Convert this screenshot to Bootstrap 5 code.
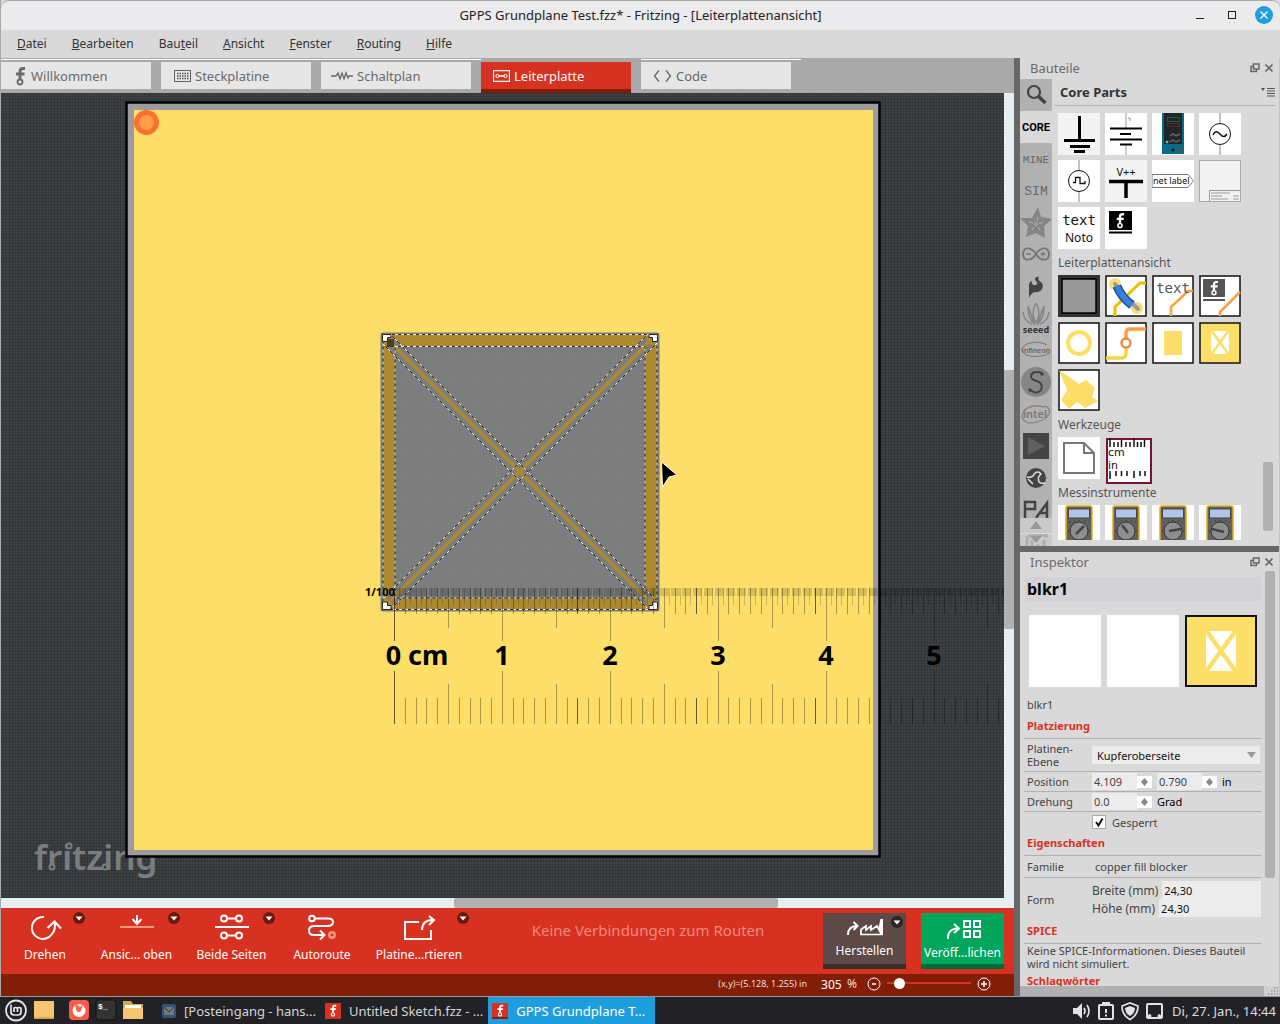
<!DOCTYPE html>
<html lang="de">
<head>
<meta charset="utf-8">
<meta name="viewport" content="width=device-width, initial-scale=1">
<title>GPPS Grundplane Test.fzz* - Fritzing - [Leiterplattenansicht]</title>
<link href="https://cdn.jsdelivr.net/npm/bootstrap@5.3.0/dist/css/bootstrap.min.css" rel="stylesheet">
<style>
:root{--fz-red:#d73122;--fz-dark:#821e08;--fz-grey:#d9d9d9;--fz-line:#b0b0b0;--fz-copper:#fdde68}
body{font-family:"Noto Sans","Open Sans",sans-serif;font-size:12px;line-height:16px;color:#333;background:#111}
button,input,select{font-family:inherit}
svg{display:block;flex:none}
.win{background:var(--fz-grey);border-left:1px solid #aaa;min-height:0}
.titlebar{height:30px;padding-bottom:2px;background:#ebebed;border-top:1px solid #aaa;border-radius:8px 8px 0 0;font-size:13px;color:#222}
.wbtns{right:7px;top:5px}
.plainbtn{border:0;background:none;padding:0;color:inherit}
.menubar{height:28px;padding-left:16px;gap:25px}
.menubar a{color:#333;text-decoration:none}
.tabstrip{height:35px;background:#a9a9a9;padding-top:1px}
.tabcell{width:160px;padding-right:10px;border-top:1px solid #fff;height:34px;padding-top:2px}
.tabcell.on{border-color:#a9a9a9}
.tabcell button{width:100%;height:27px;background:#e6e6e6;color:#6a6a6a;border:0;font-size:13px;gap:4px;padding:0 0 0 12px}
.tabcell.on button{height:31px;background:var(--fz-red);color:#fff;border-bottom:4px solid var(--fz-dark)}
.vbar{width:10px;background:#e6eef2;padding-top:277px}
.vbar div{height:259px;background:#b1b1b1;border-radius:0 0 2px 2px}
.hbar{height:10px;background:#e6eef2;padding-left:453px}
.hbar div{width:324px;height:10px;background:#b1b1b1;border-radius:2px}
.tools{height:66px;background:var(--fz-red);color:#fff}
.tool{height:66px;padding-top:5px}
.tool span{margin-top:6px}
.w88{width:88px}.w95{width:95px}.w86{width:86px}.w108{width:108px}
.tool .drop{right:4px;top:4px}
.routing{color:#f08b7a;font-size:15px;padding-bottom:22px}
.bigbtn{width:83px;height:56px;color:#fff;margin-top:5px;white-space:nowrap}
.make{background:#5d4a46;border-bottom:5px solid #392c29;margin-right:15px}
.share{background:#00a65b;border-bottom:5px solid #006b3a;margin-right:10px}
.bigbtn .drop{right:3px;top:3px}
.statusline{height:22px;background:var(--fz-dark);color:#f6ddd5;padding:0 23px 2px 0;gap:6px}
.coords{font-size:9px}
.zoombox{width:22px;height:20px;border:0;padding:0;background:none;color:#fff}
.zslide{width:84px;height:16px;appearance:none;background:linear-gradient(var(--fz-red),var(--fz-red)) 0 6px/100% 2px no-repeat;margin:0}
.zslide::-webkit-slider-thumb{appearance:none;width:11px;height:11px;border-radius:50%;background:#fff;margin-top:-2px}
.splitter{width:6px;background:#676767}
.side{width:260px;border-right:1px solid #c5c5c5}
.dockhead{height:21px;padding:0 5px 2px 10px;font-size:13px;color:#6a6a6a}
.partsdock{height:494px;border-bottom:6px solid #676767}
.bins{width:32px;background:#b1b1b1}
.bins button{width:32px;height:32px;border:0;padding:0;background:none;color:#666;flex:none}
.bins .on{background:var(--fz-grey);color:#000}
.bins .cutoff{height:23px;overflow:hidden}
.binscroll{height:28px;background:#c9c9c9;flex:none}
.binsvg{width:32px;height:32px;margin-top:-1px}
.corehead{height:27px;border-bottom:1px solid var(--fz-line);margin:0 4px 7px 3px;padding:0 0 0 5px;font-size:13px;font-weight:700}
.plist{height:427px}
.pgrid{display:grid;grid-template-columns:repeat(4,42px);grid-auto-rows:42px;gap:5px;padding-left:6px}
.plabel{height:26px;padding:6px 0 0 6px;color:#555}
.pscroll{width:10px;height:69px;background:#b1b1b1;margin:349px 6px 0 0;border-radius:2px}
.insp{padding:0 4px;min-height:0}
.partname{background:#d2d2d7;height:24px;margin:4px 0 14px 1px;padding-left:2px;font-size:16px;font-weight:700;color:#000;line-height:24px}
.views{padding:0 4px 0 5px;height:72px}
.h-sec{color:var(--fz-red);font-weight:700;font-size:11px;line-height:21px;height:24px;margin:0;padding-left:3px;border-bottom:1px solid var(--fz-line)}
.prop{border-bottom:1px solid var(--fz-line);padding-left:3px;font-size:11px;line-height:13px;color:#444}
.prop .key{width:65px;flex:none}
.field{border:0;background:#ececec;height:17px;font-size:11px;color:#444;padding:0 2px;min-width:0}
.spin{width:45px}.spinbtn{width:15px;height:12px;background:#fff;margin-right:5px}
.prop select{height:18px;color:#111;padding:0 5px;appearance:none;border-radius:0;width:168px}
.nametext{height:28px;padding-top:11px}
.h32{height:33px}.h20{height:20px}.h22{height:22px}.h41{height:42px}
.chk{width:14px;height:14px;appearance:none;background:#fff;border:1px solid #aaa;margin:0 6px 0 0;padding:0}
.sizes{font-size:12px;white-space:nowrap}
.big-field{height:18px;color:#111;width:0}
.iscroll{width:10px;height:307px;background:#b1b1b1;margin:-2px 4px 0 0;border-radius:2px}
.ibot{height:10px;background:#b1b1b1}
.taskbar{height:28px;background:#222226;color:#ddd;font-size:13px;border-top:1px solid #999;white-space:nowrap}
.task{height:27px;border:0;background:none;color:#d5d5d5;padding:0 0 0 4px;gap:8px;margin-right:5px;font-size:13px}
.task.on{background:#1f9ede;color:#fff;width:167px}
</style>
<script src="https://cdn.jsdelivr.net/npm/bootstrap@5.3.0/dist/js/bootstrap.bundle.min.js"></script>
</head>
<body class="vh-100 d-flex flex-column overflow-hidden">
<svg width="0" height="0" class="position-absolute">
 <defs>
  <symbol id="fmark" viewBox="0 0 12 20"><path d="M11 2.500H9Q6 2.500 6 5.500V13M2 8H10.500" fill="none" stroke="currentColor" stroke-width="2.800"/><circle cx="6" cy="16" r="2.500" fill="none" stroke="currentColor" stroke-width="1.800"/></symbol>
  <symbol id="drop" viewBox="0 0 12 12"><circle cx="6" cy="6" r="6" fill="#000" opacity=".5"/><path d="M2.500 4.500H9.500L6 8.500Z" fill="#fff"/></symbol>
  <symbol id="float" viewBox="0 0 10 10"><path d="M3.500 1H9V6H3.500ZM3 3.500H1V8.500H6.500V6.500" fill="none" stroke="#666" stroke-width="1.500"/></symbol>
  <symbol id="shut" viewBox="0 0 10 10"><path d="M1.500 1.500L8.500 8.500M8.500 1.500L1.500 8.500" stroke="#666" stroke-width="1.700"/></symbol>
  <symbol id="meter" viewBox="0 0 42 42"><rect width="42" height="42" fill="#fff"/><rect x="8" y="1" width="26" height="50" rx="2" fill="#616161" stroke="#e8ad10" stroke-width="1.500"/><rect x="10.500" y="4" width="21" height="9" fill="#aec6e8" stroke="#444"/><g stroke="#333"><path d="M11 17H12M16 16H17M21 15V16M26 16H27M31 17H30M10 26H11M32 26H31"/></g><circle cx="21" cy="26" r="9" fill="#8e8e8e" stroke="#333"/></symbol>
  <symbol id="updn" viewBox="0 0 15 12"><path d="M7.500 2L11 6L7.500 10L4 6Z" fill="#888"/></symbol>
  <pattern id="weave" width="3" height="3" patternUnits="userSpaceOnUse"><rect width="3" height="3" fill="#3e4244"/><path d="M0 .5H3M.5 0V3" stroke="#33373a"/></pattern>
  <pattern id="fine" width="3" height="3" patternUnits="userSpaceOnUse"><rect width="3" height="3" fill="#7f7f7f"/><path d="M0 .5H3M.5 0V3" stroke="#797b7d"/></pattern>
 </defs>
</svg>

<div class="win flex-grow-1 d-flex flex-column">
 <header class="titlebar position-relative d-flex align-items-center justify-content-center flex-shrink-0">
  <span>GPPS Grundplane Test.fzz* - Fritzing - [Leiterplattenansicht]</span>
  <div class="wbtns position-absolute d-flex">
   <button class="plainbtn" aria-label="Minimieren"><svg width="30" height="18"><path d="M11 12.500H19" stroke="#222"/></svg></button>
   <button class="plainbtn" aria-label="Maximieren"><svg width="30" height="18"><rect x="13.500" y="5.500" width="7" height="7" fill="none" stroke="#222"/></svg></button>
   <button class="plainbtn ms-2" aria-label="Schließen"><svg width="20" height="18" viewBox="0 0 20 18"><circle cx="11" cy="9" r="9" fill="#1f9ede"/><path d="M7.500 5.500L14.500 12.500M14.500 5.500L7.500 12.500" stroke="#fff" stroke-width="1.300"/></svg></button>
  </div>
 </header>
 <nav class="menubar d-flex align-items-center flex-shrink-0">
  <a href="#"><u>D</u>atei</a><a href="#"><u>B</u>earbeiten</a><a href="#">Bau<u>t</u>eil</a><a href="#"><u>A</u>nsicht</a><a href="#"><u>F</u>enster</a><a href="#"><u>R</u>outing</a><a href="#"><u>H</u>ilfe</a>
 </nav>
 <div class="d-flex flex-grow-1" style="min-height:0">
  <main class="flex-grow-1 d-flex flex-column overflow-hidden">
   <div class="tabstrip d-flex flex-shrink-0">
    <div class="tabcell"><button class="d-flex align-items-center"><svg width="14" height="20"><use href="#fmark"/></svg>Willkommen</button></div>
    <div class="tabcell"><button class="d-flex align-items-center"><svg width="18" height="12" viewBox="0 0 18 12"><rect x="1.500" y=".5" width="16" height="11" fill="none" stroke="#666"/><path d="M4 3.500H16M4 6H16M4 8.500H16" stroke="#555" stroke-width="1.500" stroke-dasharray="1.500 1"/></svg>Steckplatine</button></div>
    <div class="tabcell"><button class="d-flex align-items-center" style="padding-left:10px"><svg width="22" height="12" viewBox="0 0 22 12"><path d="M0 6H5L7 3L9 9L11 3L13 9L15 3L17 8L18 6H22" fill="none" stroke="#666" stroke-width="1.300"/></svg>Schaltplan</button></div>
    <div class="tabcell on"><button class="d-flex align-items-center"><svg width="17" height="12" viewBox="0 0 17 12"><path d="M.5 .5H16.500V11.500H.5Z M6 6H11" fill="none" stroke="#fff" stroke-width="1.300"/><circle cx="4.500" cy="6" r="1.600" fill="none" stroke="#fff"/><circle cx="12.500" cy="6" r="1.600" fill="none" stroke="#fff"/></svg>Leiterplatte</button></div>
    <div class="tabcell"><button class="d-flex align-items-center"><svg width="19" height="12" viewBox="0 0 19 12"><path d="M6 .5L1.500 6L6 11.500M13 .5L17.500 6L13 11.500" fill="none" stroke="#666" stroke-width="1.300"/></svg>Code</button></div>
   </div>
   <div class="d-flex flex-grow-1" style="min-height:0">
    <div class="flex-grow-1 overflow-hidden position-relative">
     <svg class="w-100 h-100" viewBox="1 93 1003 805" preserveAspectRatio="xMinYMin slice" role="img" aria-label="Leiterplatte mit Lineal" font-family="Noto Sans, sans-serif">
      <rect x="1" y="93" width="2003" height="1805" fill="url(#weave)"/>
      <g opacity=".75"><text x="34" y="870" font-size="35" font-weight="600" fill="#8f9496">fritzing</text>
      <g fill="#3a3d40" stroke="#8f9496" stroke-width="2"><circle cx="52" cy="867" r="2.500"/><circle cx="105" cy="867" r="2.500"/><circle cx="69" cy="846" r="2.500"/></g></g>
      <rect x="126.500" y="102.500" width="753" height="754" fill="#9c9c9e" stroke="#000" stroke-width="2.500"/>
      <rect x="134" y="110" width="739" height="740" fill="#fdde68"/>
      <circle cx="146.500" cy="122.500" r="10" fill="#ff9d4a" stroke="#ff6f32" stroke-width="5"/>
      <!-- copper blocker -->
      <rect x="380.500" y="332.500" width="279" height="279" rx="2" fill="#7c7c7c"/>
      <rect x="383" y="334" width="274" height="276" fill="#ad8a30"/>
      <rect x="395" y="347" width="250" height="251" fill="url(#fine)"/>
      <path d="M390 342L649 601M649 342L390 601" stroke="#7d7d7d" stroke-width="13"/>
      <path d="M390 342L649 601M649 342L390 601" stroke="#ad8a30" stroke-width="3.500"/>
      <g fill="none">
       <g stroke="#333"><path d="M383 334.500H657V609.500H383ZM395 346.500H645V598H395Z"/><path d="M390 334L656 600M383 344L649 610M648 334L383 599M657 343L391 609"/></g>
       <g stroke="#eee" stroke-dasharray="3 3"><path d="M383 334.500H657V609.500H383ZM395 346.500H645V598H395Z"/><path stroke-dasharray="3 4" d="M390 334L656 600M383 344L649 610M648 334L383 599M657 343L391 609"/></g>
      </g>
      <rect x="387" y="339" width="7" height="8" fill="#4c3e20"/>
      <g fill="#fff" stroke="#222"><path d="M382.500 334.500H391V337.500H387.500V341.500H382.500Z"/><path d="M657.500 334.500H649V337.500H652.500V341.500H657.500Z"/><path d="M382.500 609.500H391V605.500H387.500V602H382.500Z"/><path d="M657.500 609.500H649V605.500H652.500V602H657.500Z"/></g>
      <g id="ruler" stroke="#000" fill="none"></g>
      <g font-weight="700" fill="#000"><text x="365" y="596" font-size="11">1/100</text>
       <g font-size="27" text-anchor="middle"><text x="417" y="665">0 cm</text><text x="502" y="665">1</text><text x="610" y="665">2</text><text x="718" y="665">3</text><text x="826" y="665">4</text><text x="934" y="665">5</text></g></g>
      <path d="M661.500 462L677 475L669 477L662.500 487Z" fill="#000" stroke="#fff" stroke-width="1" stroke-linejoin="round"/>
     </svg>
    </div>
    <div class="vbar flex-shrink-0"><div></div></div>
   </div>
   <div class="hbar flex-shrink-0"><div></div></div>
   <div class="tools d-flex flex-shrink-0">
    <button class="plainbtn tool w88 position-relative d-flex flex-column align-items-center"><svg width="34" height="28" viewBox="0 0 34 28" fill="none" stroke="#fff" stroke-width="2"><path d="M16 4A11 11 0 1 0 24 21Q28 17 26.500 9M19.500 15L26.500 8.500L33 15.500"/></svg><span>Drehen</span><svg class="drop position-absolute" width="12" height="12"><use href="#drop"/></svg></button>
    <button class="plainbtn tool w95 position-relative d-flex flex-column align-items-center"><svg width="34" height="28" viewBox="0 0 34 28" fill="none" stroke="#fff" stroke-width="2"><path d="M17 2V10M12.500 6L17 11L21.500 6"/><path d="M0 14H34" stroke="#f0997f"/></svg><span>Ansic... oben</span><svg class="drop position-absolute" width="12" height="12"><use href="#drop"/></svg></button>
    <button class="plainbtn tool w95 position-relative d-flex flex-column align-items-center"><svg width="34" height="28" viewBox="0 0 34 28" fill="none" stroke="#fff" stroke-width="2"><path d="M0 14H34M12 5.500H22M12 22.500H22"/><circle cx="9" cy="5.500" r="3"/><circle cx="24" cy="5.500" r="3"/><circle cx="9" cy="22.500" r="3"/><circle cx="24" cy="22.500" r="3"/></svg><span>Beide Seiten</span><svg class="drop position-absolute" width="12" height="12"><use href="#drop"/></svg></button>
    <button class="plainbtn tool w86 d-flex flex-column align-items-center"><svg width="34" height="28" viewBox="0 0 34 28" fill="none" stroke="#fff" stroke-width="2"><circle cx="7" cy="5.500" r="2.800"/><path d="M10 5.500H23Q28 5.500 28 9T23 13H9Q4 13 4 17.500T9 22H19M15 17.500L19.500 22L15 26.500"/><circle cx="27" cy="22" r="2.700" stroke="#f0997f" stroke-width="2.500"/></svg><span>Autoroute</span></button>
    <button class="plainbtn tool w108 position-relative d-flex flex-column align-items-center"><svg width="34" height="28" viewBox="0 0 34 28" fill="none" stroke="#fff" stroke-width="2"><path d="M17 9H3V26H29V17M20 17Q20 7 31 7M27 3L32 7L27 12"/></svg><span>Platine...rtieren</span><svg class="drop position-absolute" width="12" height="12"><use href="#drop"/></svg></button>
    <div class="routing flex-grow-1 d-flex align-items-center justify-content-center">Keine Verbindungen zum Routen</div>
    <button class="plainbtn bigbtn make position-relative d-flex flex-column align-items-center"><svg width="40" height="28" viewBox="0 0 40 28" fill="none" stroke="#fff"><path d="M3 22Q3 13 12 13M8.500 9L12.500 13L8.500 17" stroke-width="2"/><path d="M16 21.500V16.500L21 13V17L26 13V17L32 13L34 16.500M15 21.500H38" stroke-width="1.700"/><path d="M33 17L35.500 6H38V22H36Z" fill="#fff" stroke="none"/></svg><span style="margin-top:2px">Herstellen</span><svg class="drop position-absolute" width="12" height="12"><use href="#drop"/></svg></button>
    <button class="plainbtn bigbtn share d-flex flex-column align-items-center"><svg width="38" height="28" viewBox="0 0 38 28" fill="none" stroke="#fff" stroke-width="2"><path d="M4 26Q3 16 15 15M10 11L15 15.500L10 20M20 8H26V14H20ZM30 8H36V14H30ZM20 18H26V24H20ZM30 18H36V24H30Z"/></svg><span style="margin-top:4px">Veröff...lichen</span></button>
   </div>
   <div class="statusline d-flex align-items-center justify-content-end flex-shrink-0">
    <span class="coords me-2">(x,y)=(5.128, 1.255) in</span>
    <label class="d-flex align-items-center gap-1 me-1"><input class="zoombox" value="305" aria-label="Zoom">%</label>
    <button class="plainbtn" aria-label="Verkleinern"><svg width="14" height="14" fill="none" stroke="#fff"><circle cx="7" cy="7" r="6"/><path d="M5 7H9" stroke-width="1.500"/></svg></button>
    <input type="range" class="zslide" min="0" max="100" value="9" aria-label="Zoomstufe">
    <button class="plainbtn" aria-label="Vergrößern"><svg width="14" height="14" fill="none" stroke="#fff"><circle cx="7" cy="7" r="6"/><path d="M4 7H10M7 4V10" stroke-width="1.500"/></svg></button>
   </div>
  </main>
  <div class="splitter flex-shrink-0"></div>
  <aside class="side flex-shrink-0 d-flex flex-column">
   <section class="partsdock d-flex flex-column flex-shrink-0">
    <div class="dockhead d-flex align-items-center gap-1 flex-shrink-0"><span class="me-auto">Bauteile</span><button class="plainbtn" aria-label="Abdocken"><svg width="10" height="10"><use href="#float"/></svg></button><button class="plainbtn" aria-label="Schließen"><svg width="10" height="10"><use href="#shut"/></svg></button></div>
    <div class="d-flex flex-grow-1 overflow-hidden">
     <div class="bins d-flex flex-column flex-shrink-0">
      <button aria-label="Suche"><svg class="binsvg" viewBox="0 0 32 32" fill="none" stroke="#444"><circle cx="14" cy="13" r="6" stroke-width="2.200"/><path d="M18 17L25.500 24" stroke-width="3.500"/></svg></button>
      <button class="on"><svg class="binsvg"><text x="16" y="20" text-anchor="middle" font-size="11" font-family="Roboto" font-weight="700">CORE</text></svg></button>
      <button><svg class="binsvg" fill="#666"><text x="16" y="20" text-anchor="middle" font-size="11" font-family="Liberation Mono">MINE</text></svg></button>
      <button><svg class="binsvg" fill="#666"><text x="16" y="20" text-anchor="middle" font-size="13" font-family="Liberation Mono">SIM</text></svg></button>
      <button aria-label="Adafruit"><svg class="binsvg" viewBox="0 0 32 32"><path d="M18 0L21 10L32 12L24 19L25 31L16 26L6 30L8 19L0 11L12 11Z" fill="#858585"/><g fill="none" stroke="#b1b1b1"><circle cx="16" cy="17" r="1.500"/><path d="M17 14L18 10M19 17L23 15M18 20L20 23M14 20L12 23M13 16L9 15"/></g></svg></button>
      <button aria-label="Arduino"><svg class="binsvg" viewBox="0 0 32 32" fill="none" stroke="#777" stroke-width="2"><path d="M16 15C12 8 3 7 3 15S12 22 16 15S29 7 29 15S20 22 16 15Z"/><path d="M6.500 15H11M20.500 15H25.500M23 12.500V17.500" stroke-width="1.300"/></svg></button>
      <button aria-label="SparkFun"><svg class="binsvg" viewBox="0 0 32 32"><path d="M9 27V17Q8 11 12 10Q11 15 16 14Q19 12 15 9Q15 5 19 6Q17 9 21 11Q24 14 22 18Q19 22 14 21Q11 23 9 27Z" fill="#444"/></svg></button>
      <button><svg class="binsvg" viewBox="0 0 32 32" fill="none"><path d="M16 0Q10 11 16 20Q22 11 16 0M8 3Q8 15 14 21Q11 10 8 3M24 3Q24 15 18 21Q21 10 24 3M3 9Q4 18 12 21M29 9Q28 18 20 21" stroke="#858585" stroke-width="1.500"/><text x="16" y="30" text-anchor="middle" fill="#333" font-size="9" font-weight="700">seeed</text></svg></button>
      <button><svg class="binsvg" viewBox="0 0 32 32" fill="none"><path d="M27 10Q18 5 7 9Q-3 14 6 20Q18 24 30 18" stroke="#777"/><text x="16" y="18" text-anchor="middle" fill="#666" font-size="7" font-weight="600">infineon</text></svg></button>
      <button aria-label="Snootlab"><svg class="binsvg" viewBox="0 0 32 32" fill="none"><circle cx="16" cy="15" r="15" fill="#868686"/><path d="M22 6Q11 3 11 10Q12 13 17 14Q24 17 21 23Q17 28 10 23" stroke="#444" stroke-width="2"/><circle cx="22" cy="7" r="1.800" fill="#444"/><circle cx="10" cy="23" r="1.800" fill="#444"/></svg></button>
      <button><svg class="binsvg" viewBox="0 0 32 32" fill="none"><path d="M24 8Q10 5 4 12Q-1 21 9 24Q24 24 29 15Q31 8 24 7" stroke="#888" stroke-width="1.500"/><text x="15" y="19" text-anchor="middle" fill="#777" font-size="11" font-weight="600">intel</text></svg></button>
      <button aria-label="Video"><svg class="binsvg" viewBox="0 0 32 32"><rect x="3" y="2" width="26" height="26" fill="#444"/><path d="M8 6L25 15L8 24Z" fill="#606060" stroke="#555"/></svg></button>
      <button aria-label="Sensor"><svg class="binsvg" viewBox="0 0 32 32" fill="none"><circle cx="16" cy="15" r="10" fill="#444"/><path d="M7 14Q13 15 14 11Q18 7 21 11Q17 14 19 19Q21 21 25 20M8 16L13 21" stroke="#ddd" stroke-width="1.500"/></svg></button>
      <button class="cutoff" aria-label="Parallax"><svg class="binsvg" viewBox="0 0 32 32" fill="none" stroke="#444" stroke-width="2.500"><path d="M5 24V8H15V15H5M16 24L27 9V24M19 19H27"/></svg></button>
      <div class="binscroll"><svg width="32" height="28"><path d="M16 3L22 11H10Z" fill="#999"/><path d="M6 20L12 17H26V20M7 21V28M12 22V28M18 26V28M24 22V28" stroke="#b0b0b0" stroke-width="3" fill="none"/><path d="M0 15.500H32" stroke="#ddd"/><path d="M10 18H22L16 25Z" fill="#999"/></svg></div>
     </div>
     <div class="flex-grow-1 overflow-hidden">
      <div class="corehead d-flex align-items-center"><span class="me-auto">Core Parts</span><svg width="14" height="10"><path d="M0 1H4L2 4Z" fill="#555"/><path d="M6 1.500H14M6 4H14M6 6.500H14M6 9H14" stroke="#555"/></svg></div>
      <div class="plist d-flex">
       <div class="flex-grow-1 overflow-hidden">
        <div class="pgrid">
         <svg width="42" height="42"><rect width="42" height="42" fill="#f3f3f3"/><path d="M21.500 3V27M6 27.500H37M12 33.500H32M16 38.500H27" stroke="#000" stroke-width="3"/></svg>
         <svg width="42" height="42"><rect width="42" height="42" fill="#fff"/><path d="M21 0V15M21 32V42M23 5H25V8" stroke="#999" fill="none"/><path d="M5 15.500H37M15 21H26M5 26.500H37M15 31.500H27" stroke="#000" stroke-width="2"/></svg>
         <svg width="42" height="42"><rect width="42" height="42" fill="#fff"/><rect x="10" width="22" height="41" fill="#066b85"/><rect x="12" width="18" height="31" fill="#22252a"/><rect x="15.500" y="4.500" width="12" height="4" fill="none" stroke="#1b5f2c"/><rect x="15.500" y="10.500" width="12" height="3" fill="none" stroke="#6b1f22"/><path d="M18 23L21 21L24 23L28 21M18 29L21 27L24 29L28 27" fill="none" stroke="#666" stroke-width="1.500"/><circle cx="15" cy="29" r="1.500" fill="#4db89b"/><circle cx="21" cy="37" r="1.500" fill="#111"/><circle cx="27" cy="37" r="1.500" fill="#a33"/></svg>
         <svg width="42" height="42" fill="none"><rect width="42" height="42" fill="#fff"/><path d="M21 0V11M21 32V42" stroke="#888"/><circle cx="21" cy="21" r="10.500" stroke="#111"/><path d="M14 22Q17 16 21 21T28 21" stroke="#111" stroke-width="1.500"/></svg>
         <svg width="42" height="42" fill="none"><rect width="42" height="42" fill="#fff"/><path d="M21 0V11M21 32V42" stroke="#888"/><circle cx="21" cy="21" r="10.500" stroke="#111"/><path d="M15 22.500H17.500V17.500H22V23.500H27V21" stroke="#111" stroke-width="1.300"/></svg>
         <svg width="42" height="42"><rect width="42" height="42" fill="#f3f3f3"/><text x="21" y="16" text-anchor="middle" font-size="11" fill="#111">V++</text><path d="M4 21.500H38M21 21V38" stroke="#000" stroke-width="3.500"/></svg>
         <svg width="42" height="42"><rect width="42" height="42" fill="#fff"/><path d="M0 14.500H36L41.500 21L36 27.500H0Z" fill="none" stroke="#777"/><text x="1" y="24" font-size="9" fill="#111">net label</text></svg>
         <svg width="42" height="42"><rect x=".5" y=".5" width="41" height="41" fill="#f2f2f2" stroke="#aaa"/><path d="M10.500 42V30.500H42M12 33H31M12 36H23M12 39H29M34 36H40M34 39H40" fill="none" stroke="#999"/></svg>
         <svg width="42" height="42" fill="#111" text-anchor="middle"><rect width="42" height="42" fill="#fff"/><text x="21" y="18" font-family="DejaVu Sans Mono" font-size="14">text</text><text x="21" y="35" font-size="12">Noto</text></svg>
         <svg width="42" height="42" color="#fff"><rect width="42" height="42" fill="#fff"/><path d="M4 4H27V23H4ZM4 24.500H27V26.500H4Z"/><use href="#fmark" x="10" y="5" width="10" height="17"/></svg>
        </div>
        <div class="plabel">Leiterplattenansicht</div>
        <div class="pgrid">
         <svg width="42" height="42"><rect width="42" height="42" fill="#333"/><rect x="4" y="4" width="34" height="34" fill="#999" stroke="#000" stroke-width="1.500"/></svg>
         <svg width="42" height="42" fill="none"><rect x="1" y="1" width="40" height="40" fill="#fff" stroke="#111" stroke-width="1.500"/><path d="M41 8H35L10 32V41" stroke="#f0c000" stroke-width="3"/><circle cx="10" cy="9" r="6" fill="#f7dc77"/><circle cx="32" cy="33" r="6" fill="#f7dc77"/><path d="M10 9L16 16M27 28L33 34" stroke="#999" stroke-width="4" stroke-linecap="round"/><path d="M12 11Q16 22 27 30" stroke="#1552a5" stroke-width="9"/><path d="M12 11Q16 22 27 30" stroke="#3d7fd6" stroke-width="6"/></svg>
         <svg width="42" height="42"><rect x="1" y="1" width="40" height="40" fill="#fff" stroke="#111" stroke-width="1.500"/><path d="M41 16H36L19 32V41" fill="none" stroke="#ff9d42" stroke-width="2.500"/><text x="21" y="18" text-anchor="middle" font-family="DejaVu Sans Mono" font-size="14" fill="#555">text</text></svg>
         <svg width="42" height="42" color="#fff"><rect x="1" y="1" width="40" height="40" fill="#fff" stroke="#111" stroke-width="1.500"/><path d="M41 17L21 37V41" fill="none" stroke="#ff9d42" stroke-width="2.500"/><path d="M4 4H26V22H4ZM4 24H26V26H4Z" fill="#555"/><use href="#fmark" x="10" y="5" width="10" height="16"/></svg>
         <svg width="42" height="42"><rect x="1" y="1" width="40" height="40" fill="#fff" stroke="#111" stroke-width="1.500"/><circle cx="21" cy="21" r="11" fill="none" stroke="#fdde68" stroke-width="4"/></svg>
         <svg width="42" height="42" fill="none"><rect x="1" y="1" width="40" height="40" fill="#fff" stroke="#111" stroke-width="1.500"/><path d="M41 7H25Q21 7 21 11V16" stroke="#ff9d42" stroke-width="3.500"/><path d="M1 36H16Q21 36 21 31V26" stroke="#f0d640" stroke-width="3.500"/><circle cx="21" cy="21" r="4.500" stroke="#f08a40" stroke-width="2.500"/></svg>
         <svg width="42" height="42"><rect x="1" y="1" width="40" height="40" fill="#fff" stroke="#111" stroke-width="1.500"/><rect x="12" y="9" width="18" height="24" fill="#fdde68"/></svg>
         <svg width="42" height="42"><rect x="1" y="1" width="40" height="40" fill="#fdde68" stroke="#111" stroke-width="1.500"/><rect x="12" y="9" width="18" height="23" fill="#fff"/><path d="M12 8L30 33M30 8L12 33" stroke="#fdde68" stroke-width="2.500"/></svg>
         <svg width="42" height="42"><rect x="1" y="1" width="40" height="40" fill="#fff" stroke="#111" stroke-width="1.500"/><path d="M1 1L21 15L28 11L37 19L34 28L40 32L27 39L19 33L11 40L3 31L9 21Z" fill="#fdde68"/></svg>
        </div>
        <div class="plabel">Werkzeuge</div>
        <div class="pgrid">
         <svg width="42" height="42"><rect width="42" height="42" fill="#fff"/><path d="M6 6H26L36 16V36H6ZM26 6V16H36" fill="none" stroke="#777" stroke-width="2"/></svg>
         <svg width="47" height="47" viewBox="0 0 47 47"><rect x="2" y="2" width="44" height="44" fill="#fff" stroke="#7a1238" stroke-width="2"/><path d="M5 1V10M9 5V10M13 5V10M16.500 3V10M21 5V10M25 5V10M29 1V10M32.500 5V10M36 5V10M39.500 3V10M5 34V42M11 34V39M16.500 34V39M22 34V39M29 34V41M35 34V39M40 34V39" stroke="#111" stroke-width="1.500"/><g font-size="11" fill="#111" font-family="DejaVu Sans"><text x="3" y="19">cm</text><text x="3" y="32">in</text></g></svg>
        </div>
        <div class="plabel">Messinstrumente</div>
        <div class="pgrid">
         <svg width="42" height="42"><use href="#meter"/><path d="M18 29L26 21" stroke="#444" stroke-width="2.500"/></svg>
         <svg width="42" height="42"><use href="#meter"/><path d="M17 20L23 28" stroke="#444" stroke-width="2.500"/></svg>
         <svg width="42" height="42"><use href="#meter"/><path d="M17 26L29 24" stroke="#444" stroke-width="2.500"/></svg>
         <svg width="42" height="42"><use href="#meter"/><path d="M13 24L25 27" stroke="#444" stroke-width="2.500"/></svg>
        </div>
       </div>
       <div class="pscroll flex-shrink-0"></div>
      </div>
     </div>
    </div>
   </section>
   <section class="flex-grow-1 d-flex flex-column" style="min-height:0">
    <div class="dockhead d-flex align-items-center gap-1 flex-shrink-0"><span class="me-auto">Inspektor</span><button class="plainbtn" aria-label="Abdocken"><svg width="10" height="10"><use href="#float"/></svg></button><button class="plainbtn" aria-label="Schließen"><svg width="10" height="10"><use href="#shut"/></svg></button></div>
    <div class="d-flex flex-grow-1" style="min-height:0">
     <div class="insp flex-grow-1 overflow-hidden">
      <div class="partname">blkr1</div>
      <div class="views d-flex justify-content-between">
       <svg width="72" height="72"><rect width="72" height="72" fill="#fff"/></svg><svg width="72" height="72"><rect width="72" height="72" fill="#fff"/></svg>
       <svg width="72" height="72"><rect x="1" y="1" width="70" height="70" fill="#fdde68" stroke="#111" stroke-width="2"/><rect x="21" y="16" width="30" height="40" fill="#fff"/><path d="M20 14L52 58M52 14L20 58" stroke="#fdde68" stroke-width="4.500"/></svg>
      </div>
      <div class="prop border-0 nametext">blkr1</div>
      <h6 class="h-sec">Platzierung</h6>
      <div class="prop h32 d-flex align-items-center"><label class="key" for="lay">Platinen-<br>Ebene</label>
       <div class="position-relative"><select id="lay" class="field"><option>Kupferoberseite</option></select><svg class="position-absolute end-0 top-0 me-1 mt-1 pe-none" width="9" height="10"><path d="M0 2H9L4.500 8Z" fill="#999"/></svg></div></div>
      <div class="prop h20 d-flex align-items-center"><label class="key" for="px">Position</label><input id="px" class="field spin" value="4.109"><svg class="spinbtn"><use href="#updn"/></svg><input class="field spin" value="0.790" aria-label="Position Y"><svg class="spinbtn"><use href="#updn"/></svg><span class="text-black">in</span></div>
      <div class="prop h20 d-flex align-items-center"><label class="key" for="rot">Drehung</label><input id="rot" class="field spin" value="0.0"><svg class="spinbtn"><use href="#updn"/></svg><span class="text-black">Grad</span></div>
      <div class="prop h20 border-0 d-flex align-items-center"><span class="key"></span><span class="position-relative d-flex"><input id="lock" type="checkbox" class="chk" checked><svg class="position-absolute pe-none" width="14" height="14"><path d="M4 7L6.500 10.500L10.500 3.500" fill="none" stroke="#111" stroke-width="2"/></svg></span><label for="lock">Gesperrt</label></div>
      <h6 class="h-sec">Eigenschaften</h6>
      <div class="prop h22 d-flex align-items-center"><span class="key">Familie</span><span style="padding-left:3px">copper fill blocker</span></div>
      <div class="prop h41 border-0 d-flex align-items-center"><span class="key">Form</span><div class="sizes flex-grow-1">
       <div class="d-flex align-items-center gap-1"><label for="bw">Breite (mm)</label><input id="bw" class="field big-field flex-grow-1" value="24,30"></div>
       <div class="d-flex align-items-center gap-1"><label for="bh">Höhe (mm)</label><input id="bh" class="field big-field flex-grow-1" value="24,30"></div></div></div>
      <h6 class="h-sec">SPICE</h6>
      <div class="prop border-0">Keine SPICE-Informationen. Dieses Bauteil wird nicht simuliert.</div>
      <h6 class="h-sec">Schlagwörter</h6>
     </div>
     <div class="iscroll flex-shrink-0"></div>
    </div>
    <div class="ibot d-flex justify-content-end flex-shrink-0"><svg width="15" height="10"><rect width="15" height="10" fill="#d0d0d0"/><path d="M4 8H14M7 5H14M10 2H14" stroke="#999" stroke-width="1.500" stroke-dasharray="1.500 1.500"/></svg></div>
   </section>
  </aside>
 </div>
</div>
<footer class="taskbar d-flex align-items-center flex-shrink-0">
 <svg width="158" height="27" viewBox="0 0 158 27" fill="none"><circle cx="16" cy="13.500" r="10" stroke="#e5e5e5" stroke-width="1.800"/><path d="M11 7.500V15Q11 18 14 18H18Q21 18 21 15V12Q21 10.500 19 10.500T17.500 12V15M17.500 12Q17.500 10.500 15.500 10.500T14 12V15" stroke="#e5e5e5" stroke-width="1.700"/>
  <rect x="34" y="4" width="20" height="18" fill="#f8c572"/><rect x="34" y="20" width="20" height="2" fill="#d8a452"/>
  <rect x="69" y="3" width="20" height="20" rx="4" fill="#ff5a45"/><circle cx="79" cy="13.500" r="6.500" fill="#fff"/><path d="M75 6L80 10L83 7L81 14Q78 17 76 13Z" fill="#ff6648"/>
  <rect x="96" y="3" width="20" height="20" rx="3" fill="#333" stroke="#111"/><text x="98" y="12" font-size="8" fill="#fff" font-family="Liberation Mono" font-weight="700">$_</text>
  <path d="M123 4H131L133 7H143V22H123Z" fill="#dba552"/><rect x="125" y="8" width="16" height="4" fill="#fff"/><path d="M123 11H143V22H123Z" fill="#f8c572"/></svg>
 <button class="task d-flex align-items-center"><svg width="14" height="14"><rect width="14" height="14" rx="2" fill="#31547a"/><rect x="2" y="3" width="10" height="8" fill="#777"/><path d="M2 3L7 8L12 3" stroke="#333" fill="none"/></svg>[Posteingang - hans...</button>
 <button class="task d-flex align-items-center"><svg width="16" height="16" color="#fff"><rect width="16" height="16" fill="#d73122"/><use href="#fmark" x="4" y="1" width="8" height="13"/></svg>Untitled Sketch.fzz - ...</button>
 <button class="task on d-flex align-items-center"><svg width="16" height="16" color="#fff"><rect width="16" height="16" fill="#d73122"/><path d="M0 15H16" stroke="#821e08" stroke-width="2"/><use href="#fmark" x="4" y="1" width="8" height="13"/></svg>GPPS Grundplane T...</button>
 <svg class="ms-auto me-2" width="92" height="20" viewBox="0 0 92 20" fill="none" stroke="#e2e2e2" stroke-width="2"><path d="M1 7H5L10 2V18L5 13H1Z" fill="#e2e2e2" stroke="none"/><path d="M12 7Q14 10 12 13M15 4Q19 10 15 16" stroke-width="1.700"/><rect x="27" y="4" width="14" height="14" rx="1"/><path d="M31 4V2H37V4M34 8V12M34 13.500V15.500"/><path d="M50 5L58 2L66 5Q66 14 58 18.500Q50 14 50 5Z" stroke-width="1.700"/><path d="M53 7L58 5L63 7Q63 12 58 15Q53 12 53 7Z" fill="#e2e2e2" stroke="none"/><rect x="75" y="3" width="15" height="14" rx="1"/><path d="M76 16L79 14M89 16L86 14" stroke-width="3"/></svg>
 <span class="pe-1">Di, 27. Jan., 14:44</span>
</footer>
<script>
// Ruler: 107.9 px per centimetre, ticks at 1 mm (both edges), 0.5 mm and a dense fine scale along the upper edge.
(function(){
 const mm=10.79,x0=394.5;let n="",f="",h="";
 for(let i=0;i<=300;i++){
  const x=Math.floor(x0+i*mm)+.5;
  const t=i%10===0?53:i%5===0?40:26;
  n+=`M${x} 588V${588+t}M${x} ${724-t}V724`;
  h+=`M${Math.floor(x+mm/2)}.5 588V605`;
 }
 for(let x=396;x<1900;x+=11)f+=`M${x} 592H${x+9}`;
 document.getElementById("ruler").innerHTML=
  `<path d="${n}" opacity=".32"/><path d="${h}" opacity=".18"/><path d="${f}" stroke-width="8" opacity=".15"/><path d="M394.500 588V641M394.500 671V724M577.500 588V614M577.500 698V724M696.500 588V614M696.500 698V724M815.500 588V614M815.500 698V724" opacity=".4"/>`;
})();
</script>
</body>
</html>
